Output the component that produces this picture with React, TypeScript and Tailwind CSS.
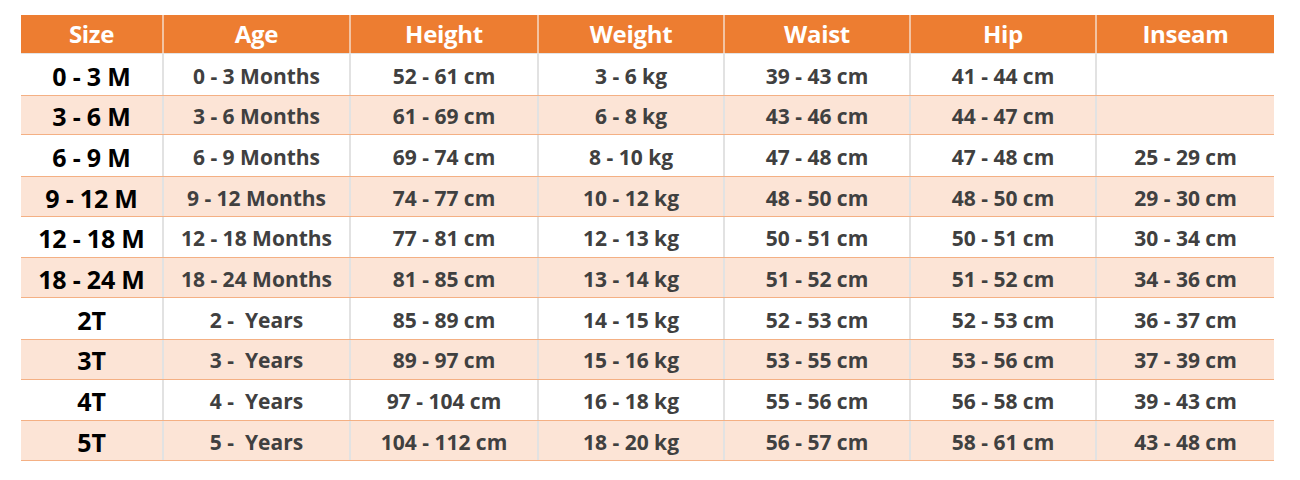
import React from 'react';

const headers = ['Size', 'Age', 'Height', 'Weight', 'Waist', 'Hip', 'Inseam'];
const widths = ['w-[141px]', 'w-[187px]', 'w-[188px]', 'w-[186px]', 'w-[186px]', 'w-[186px]', 'w-[179px]'];

const rows: string[][] = [
  ['0 - 3 M', '0 - 3 Months', '52 - 61 cm', '3 - 6 kg', '39 - 43 cm', '41 - 44 cm', ''],
  ['3 - 6 M', '3 - 6 Months', '61 - 69 cm', '6 - 8 kg', '43 - 46 cm', '44 - 47 cm', ''],
  ['6 - 9 M', '6 - 9 Months', '69 - 74 cm', '8 - 10 kg', '47 - 48 cm', '47 - 48 cm', '25 - 29 cm'],
  ['9 - 12 M', '9 - 12 Months', '74 - 77 cm', '10 - 12 kg', '48 - 50 cm', '48 - 50 cm', '29 - 30 cm'],
  ['12 - 18 M', '12 - 18 Months', '77 - 81 cm', '12 - 13 kg', '50 - 51 cm', '50 - 51 cm', '30 - 34 cm'],
  ['18 - 24 M', '18 - 24 Months', '81 - 85 cm', '13 - 14 kg', '51 - 52 cm', '51 - 52 cm', '34 - 36 cm'],
  ['2T', '2 -  Years', '85 - 89 cm', '14 - 15 kg', '52 - 53 cm', '52 - 53 cm', '36 - 37 cm'],
  ['3T', '3 -  Years', '89 - 97 cm', '15 - 16 kg', '53 - 55 cm', '53 - 56 cm', '37 - 39 cm'],
  ['4T', '4 -  Years', '97 - 104 cm', '16 - 18 kg', '55 - 56 cm', '56 - 58 cm', '39 - 43 cm'],
  ['5T', '5 -  Years', '104 - 112 cm', '18 - 20 kg', '56 - 57 cm', '58 - 61 cm', '43 - 48 cm'],
];

export default function App() {
  return (
    <div className="w-[1300px] h-[480px] bg-white pt-[15px] pl-[21px] font-['Open_Sans',sans-serif] font-bold">
      <div className="flex flex-col w-[1253px]">
        <div className="flex h-[39px] bg-[#ed7d31] border-b border-[#e4e4e4]">
          {headers.map((h, i) => (
            <div
              key={h}
              className={`${widths[i]} flex items-center justify-center text-white text-[24px] tracking-[-0.3px] ${i > 0 ? 'border-l-2 border-[#f3c3a2]' : ''}`}
            >
              {h}
            </div>
          ))}
        </div>
        {rows.map((r, ri) => {
          const tint = ri % 2 === 1;
          return (
            <div
              key={ri}
              className={`flex h-[40.7px] ${tint ? 'bg-[#fce4d6] border-y border-[#f4b084]' : 'bg-white'}`}
            >
              {r.map((c, ci) => (
                <div
                  key={ci}
                  className={`${widths[ci]} flex items-center justify-center whitespace-pre pt-[4px] ${
                    ci === 0 ? 'text-black text-[25px] tracking-[-0.2px]' : 'text-[#404040] text-[21px]'
                  } ${ci > 0 ? 'border-l-2 border-[#e2e2e2]' : ''}`}
                >
                  {c}
                </div>
              ))}
            </div>
          );
        })}
      </div>
    </div>
  );
}
